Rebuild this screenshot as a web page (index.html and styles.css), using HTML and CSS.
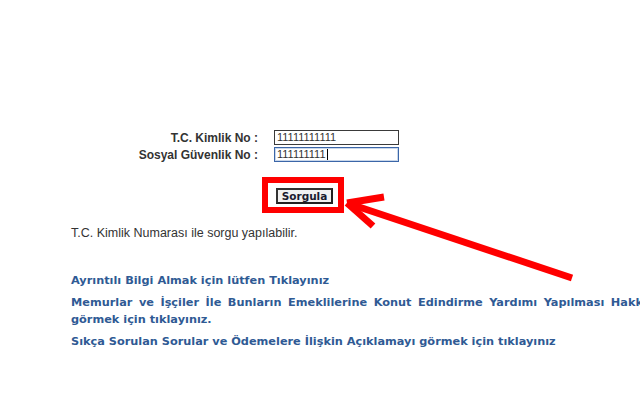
FILE: index.html
```html
<!DOCTYPE html>
<html lang="tr">
<head>
<meta charset="utf-8">
<title>Sorgulama</title>
<link rel="stylesheet" href="styles.css">
</head>
<body>
<div class="page">
  <div class="form">
    <label class="label">T.C. Kimlik No :</label>
    <div class="field">11111111111</div>
    <label class="label">Sosyal Güvenlik No :</label>
    <div class="field focused">111111111<span class="caret"></span></div>
  </div>
  <div class="mark">
    <button class="btn" type="button">Sorgula</button>
  </div>
  <p class="note">T.C. Kimlik Numarası ile sorgu yapılabilir.</p>
  <div class="links">
    <a class="link" href="#">Ayrıntılı Bilgi Almak için lütfen Tıklayınız</a>
    <a class="link wide" href="#"><span class="line1">Memurlar ve İşçiler İle Bunların Emeklilerine Konut Edindirme Yardımı Yapılması Hakkında</span><br>görmek için tıklayınız.</a>
    <a class="link" href="#">Sıkça Sorulan Sorular ve Ödemelere İlişkin Açıklamayı görmek için tıklayınız</a>
  </div>
  <svg class="arrow" width="640" height="414" viewBox="0 0 640 414">
    <g stroke="#ff0000" stroke-width="7" fill="none" stroke-linecap="butt" stroke-linejoin="miter">
      <line x1="572" y1="278" x2="347" y2="203"/>
      <line x1="347" y1="203" x2="384" y2="197"/>
      <line x1="347" y1="203" x2="373" y2="226"/>
    </g>
  </svg>
</div>
</body>
</html>
```
FILE: styles.css
```css
html, body {
  margin: 0;
  padding: 0;
  background: #ffffff;
  overflow: hidden;
}
.page {
  position: relative;
  width: 640px;
  height: 414px;
  overflow: hidden;
  padding-top: 130px;
  box-sizing: border-box;
  font-family: "Liberation Sans", Arial, sans-serif;
  color: #333333;
}
.form {
  display: grid;
  grid-template-columns: 258px 125px;
  grid-auto-rows: 17px;
  column-gap: 16px;
}
.label {
  font-weight: bold;
  font-size: 12px;
  line-height: 17px;
  text-align: right;
  color: #333333;
}
.field {
  box-sizing: border-box;
  height: 15px;
  border: 1px solid #3a3a3a;
  font-family: "Liberation Sans", Arial, sans-serif;
  font-size: 11px;
  line-height: 13px;
  padding-left: 2px;
  color: #333333;
  display: flex;
  align-items: center;
}
.field.focused {
  border-color: #3b66a8;
  box-shadow: inset 0 0 0 1px #c9d7ea;
}
.caret {
  display: inline-block;
  width: 1px;
  height: 11px;
  background: #000000;
  margin-left: 1px;
}
.mark {
  width: 82px;
  box-sizing: border-box;
  margin: 13px 0 0 262px;
  border: 6px solid #ff0000;
  padding: 5px 5px 3px 8px;
}
.btn {
  display: block;
  box-sizing: border-box;
  width: 57px;
  height: 16px;
  padding: 0;
  margin: 0;
  border: 2px solid #333333;
  border-right-color: #222222;
  border-bottom-color: #222222;
  background: #f2f2f2;
  font-family: "DejaVu Sans", Verdana, sans-serif;
  font-weight: bold;
  font-size: 10.5px;
  line-height: 12px;
  color: #1b1b2f;
}
.note {
  margin: 13px 0 0 71px;
  font-size: 12.5px;
  line-height: 15px;
  color: #333333;
}
.links {
  margin: 31px 0 0 71px;
  display: flex;
  flex-direction: column;
  row-gap: 5px;
}
.link {
  display: block;
  font-family: "DejaVu Sans", Verdana, sans-serif;
  font-weight: bold;
  font-size: 11.3px;
  line-height: 17px;
  color: #2f5a94;
  text-decoration: none;
  white-space: nowrap;
}
.line1 {
  word-spacing: 2.6px;
}
.arrow {
  position: absolute;
  left: 0;
  top: 0;
  pointer-events: none;
}
```
